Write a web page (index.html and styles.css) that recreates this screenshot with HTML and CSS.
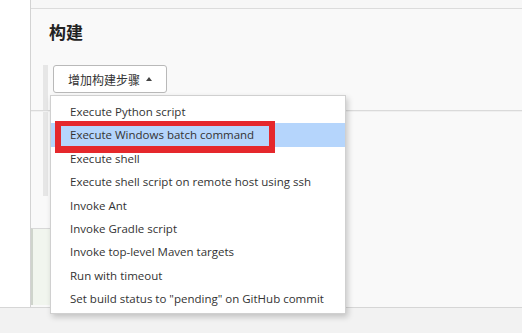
FILE: index.html
```html
<!DOCTYPE html>
<html lang="zh-CN">
<head>
  <meta charset="UTF-8">
  <title>构建</title>
  <link rel="stylesheet" href="styles.css">
</head>
<body>
  <div class="page">
    <div class="side"></div>
    <div class="main">
      <div class="top-strip"></div>
      <div class="section">
        <h2>构建</h2>
        <div class="builder">
          <button class="add-btn">增加构建步骤 <span class="caret"></span></button>
        </div>
      </div>
      <div class="section-line"></div>
      <div class="post">
        <div class="post-bar"></div>
        <div class="post-box"></div>
      </div>

      <div class="menu">
        <div class="item">Execute Python script</div>
        <div class="item active">Execute Windows batch command</div>
        <div class="item">Execute shell</div>
        <div class="item">Execute shell script on remote host using ssh</div>
        <div class="item">Invoke Ant</div>
        <div class="item">Invoke Gradle script</div>
        <div class="item">Invoke top-level Maven targets</div>
        <div class="item">Run with timeout</div>
        <div class="item">Set build status to "pending" on GitHub commit</div>
        <div class="mark"></div>
      </div>
    </div>
  </div>
  <div class="footer"></div>
</body>
</html>
```

FILE: styles.css
```css
body {
  margin: 0;
  font-family: "Open Sans", "Noto Sans CJK SC", sans-serif;
  color: #333;
  background: #f2f2f2;
}
.page {
  display: flex;
  height: 307px;
  border-bottom: 1px solid #d6d6d6;
}
.side {
  width: 30px;
  background: #fff;
  border-right: 1px solid #d3d3d3;
}
.main {
  flex: 1;
  position: relative;
  background: #f9f9f9;
}
.top-strip {
  height: 8px;
  border-bottom: 1px solid #dcdcdc;
  background: #f7f7f7;
}
.section {
  padding-left: 18px;
}
h2 {
  margin: 0;
  padding-top: 13px;
  font-size: 17px;
  font-weight: bold;
  color: #222;
  line-height: 22px;
}
.builder {
  margin-top: 21px;
  margin-left: -6px;
  border-left: 5px solid #e6e6e6;
  padding-left: 5px;
  height: 45px;
}
.add-btn {
  height: 28px;
  padding: 0 14px;
  background: #fff;
  border: 1px solid #b9b9b9;
  border-radius: 3px;
  font-family: "Noto Sans CJK SC", sans-serif;
  font-size: 12px;
  color: #333;
  display: flex;
  align-items: center;
  gap: 6px;
}
.caret {
  width: 0;
  height: 0;
  border-left: 3.5px solid transparent;
  border-right: 3.5px solid transparent;
  border-bottom: 4px solid #444;
}
.section-line {
  border-top: 1px solid #dadada;
  border-bottom: 1px solid #f0f0f0;
}
.post {
  position: relative;
  height: 194px;
}
.post-bar {
  margin-left: 12px;
  width: 5px;
  height: 84px;
  background: #e6e6e6;
}
.post-box {
  margin-top: 32px;
  width: 260px;
  height: 76px;
  border-top: 1px solid #d8d8d8;
  border-left: 2px solid #cfd4cc;
  background: #f1f5ee;
}
.menu {
  position: absolute;
  left: 19px;
  top: 95px;
  width: 294px;
  padding: 4px 0 2px;
  background: #fff;
  border: 1px solid #d0d0d0;
  box-shadow: 2px 3px 6px rgba(0, 0, 0, 0.2);
  font-size: 11.5px;
}
.item {
  height: 23.4px;
  line-height: 23.4px;
  padding-left: 19px;
  white-space: nowrap;
  color: #333;
}
.item.active {
  background: #b5d5fc;
}
.mark {
  position: absolute;
  left: 4px;
  top: 25px;
  width: 208px;
  height: 20px;
  border-style: solid;
  border-color: #e5282c;
  border-width: 5px 6px 7px 6px;
}
.footer {
  height: 25px;
}
```
